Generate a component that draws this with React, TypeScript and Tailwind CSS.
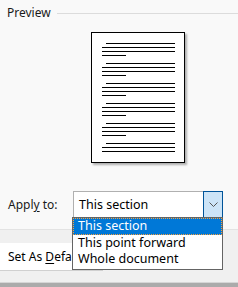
import React from 'react';

const groups = [4, 4, 4, 4, 4, 3];

const PageLines: React.FC<{ count: number }> = ({ count }) => (
  <div className="flex flex-col gap-[3px]">
    {Array.from({ length: count }).map((_, i) => (
      <div
        key={i}
        className={`h-px bg-black ${i === 0 ? 'ml-[4px]' : ''} ${i === 3 ? 'w-[24px]' : ''}`}
      />
    ))}
  </div>
);

const App: React.FC = () => {
  return (
    <div
      className="relative w-[238px] h-[287px] overflow-hidden bg-[#f9f9f9] text-[12px] text-[#1a1a1a]"
      style={{ fontFamily: '"Noto Sans", "Open Sans", sans-serif' }}
    >
      <div className="h-[229px] flex flex-col">
        <div className="flex items-center h-[26px] pl-[7px]">
          <span className="leading-none">Preview</span>
          <div className="flex-1 h-px bg-[#dcdcdc] ml-[6px]" />
        </div>

        <div className="ml-[91px] mt-[6px] w-[94px] h-[131px] bg-white border border-black shadow-[2px_2px_2px_rgba(0,0,0,0.3)] pt-[10px] pl-[10px] pr-[9px] flex flex-col gap-[7px]">
          {groups.map((n, i) => (
            <PageLines key={i} count={n} />
          ))}
        </div>

        <div className="flex items-center mt-[28px] h-[27px]">
          <span className="pl-[8px] w-[73px]">
            Appl<span className="underline underline-offset-2">y</span> to:
          </span>
          <div className="flex w-[150px] h-[27px] bg-white border border-[#b0b0b0] border-b-0">
            <span className="flex-1 pl-[5px] flex items-center text-[12.5px] text-black">This section</span>
            <div className="w-[20px] h-[27px] -mt-px -mr-px bg-[#cce4f7] border border-[#005499] flex items-center justify-center">
              <svg width="9" height="5" viewBox="0 0 9 5" fill="none">
                <path d="M0.5 0.5 L4.5 4.5 L8.5 0.5" stroke="#555" strokeWidth="1" />
              </svg>
            </div>
          </div>
        </div>
      </div>

      <div className="h-[53px] bg-[#f0f0f0] border-t border-[#e3e3e3] pt-[13px]">
        <div className="w-[103px] h-[28px] bg-white border-b border-r border-[#d0d0d0] flex items-center pl-[8px] text-black">
          <span className="w-[64px] overflow-hidden whitespace-nowrap">
            Set As <span className="underline underline-offset-2">D</span>efault
          </span>
        </div>
      </div>
      <div className="h-[5px] bg-[#ababab] border-t border-[#d6d6d6]" />

      <div className="absolute left-[72px] top-[217px] w-[151px] bg-white border border-[#646464] pb-[2px] text-[12.5px] text-black">
        <div className="h-[17px] bg-[#0078d7] text-white pl-[5px] flex items-center outline-1 outline-dotted outline-[#f7a13c] -outline-offset-1">
          This section
        </div>
        <div className="h-[16px] pl-[5px] flex items-center">This point forward</div>
        <div className="h-[16px] pl-[5px] flex items-center">Whole document</div>
      </div>
    </div>
  );
};

export default App;
